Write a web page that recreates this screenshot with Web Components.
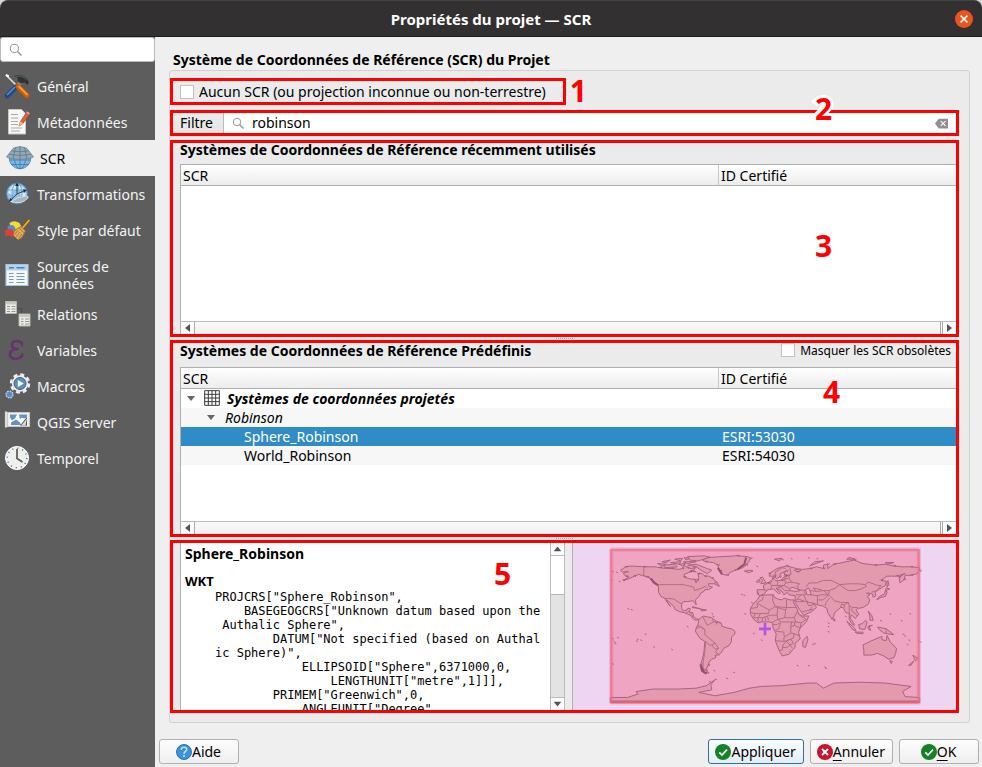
<!DOCTYPE html>
<html lang="fr">
<head>
<meta charset="utf-8">
<title>Propriétés du projet — SCR</title>
<style>
html, body { height: 100%; margin: 0; }
body { font: 14px/18px "Noto Sans", sans-serif; color: #000; background: #d8d8d8; }
</style>
</head>
<body>
<project-dialog></project-dialog>
<script>
const ICONS = {
  search: `<circle cx="10" cy="10" r="7.500" fill="none" stroke="#8c8c8c" stroke-width="1.8"/><path d="M15.500 15.500l7.500 7.500" stroke="#8c8c8c" stroke-width="2.4"/>`,
  general: `<path d="M1.5 1.500l10 10" stroke="#e4e4e0" stroke-width="1.6" stroke-linecap="round"/><path d="M.8 1l3 1.200" stroke="#fff" stroke-width="2"/><path d="M16 8L11 13" stroke="#888a85" stroke-width="3.500"/><path d="M2 22l9-9" stroke="#204a87" stroke-width="5" stroke-linecap="round"/><path d="M2 21l8-8" stroke="#5c8fd0" stroke-width="1.500"/><path d="M13 12.500l9 9" stroke="#ce5c00" stroke-width="5" stroke-linecap="round"/><path d="M13.500 12l9 9" stroke="#ff9630" stroke-width="2"/><path d="M9 2c5-2 10-1 13 3l2 3-1.500 3-3-2.500-4 1-3-3c1-2 0-3-3.500-4.500z" fill="#2e3436"/><path d="M11 2.500c4-1 8 0 10 3" stroke="#626765" fill="none"/>`,
  metadata: `<path d="M3.500-.5h13l4 4v20.500h-17z" fill="#f8f8f6" stroke="#c8c8c4"/><path d="M6 4.500h7M6 8h7M6 11.500h7M6 14.500h7M6 18h11M6 21h9" stroke="#aaa" stroke-width="1.200"/><path d="M14 16l1.500-4.500 5.500-8.500 3 2-6 8.500z" fill="#e0662f" stroke="#a9401b" stroke-width=".7"/><path d="M14 16l1.500-4.500 2.500 2z" fill="#e8c9a0"/><path d="M21 3L22 1.300l2.800 1.700-.8 2z" fill="#ee9a9a"/>`,
  crs: `<circle cx="12" cy="12" r="10.800" fill="#7db6e4" stroke="#4d87b8" stroke-width=".8"/><ellipse cx="12" cy="12" rx="5.500" ry="10.800" fill="none" stroke="#3f78aa" stroke-width=".8"/><path d="M12 1v22M1.500 14h21M3 18.500h18" stroke="#3f78aa" stroke-width=".8"/><path d="M-1.500 11L5 2.500Q12-1 19 2.500L25.500 11l-4 1.500Q12 14.500 2.500 12.500z" fill="#93a9b5" stroke="#6b8593" stroke-width=".8"/><path d="M1 8.200c7 1.500 15 1.500 22 0M3.500 4.800c6 1.200 11 1.200 17 0M7.500 1.500L5 13M16.500 1.500l2.500 11.500M12 .5v13" stroke="#5d7886" stroke-width=".8" fill="none"/>`,
  transform: `<circle cx="12" cy="11.500" r="10.500" fill="#8ec1ea" stroke="#4b81b1" stroke-width=".8"/><path d="M4 7l4-4 4 1-1 4-3 1-1 4-4-2zM14 3l5 3-2 4-3-2zM15 11h6l-1 4-4-1z" fill="#d5e8f6"/><ellipse cx="12" cy="11.500" rx="5" ry="10.500" fill="none" stroke="#4f87b8" stroke-width=".7"/><path d="M2 8h20" stroke="#4f87b8" stroke-width=".7"/><path d="M12 2v10L5.500 18M12 12l8-3.500" stroke="#3a4650" stroke-width="1" fill="none"/><path d="M12 .5l1.800 3.500h-3.600zM4 20l1.200-4 2.600 2.600zM22 8l-2.800 2.500-1.200-3z" fill="#1d2730"/><path d="M5.500 19.500Q12 15 21 14q3 0 2 2-6 7-17.500 3.500z" fill="#a9b3b8" stroke="#e4e9ec" stroke-width=".8"/>`,
  style: `<path d="M4.500 5Q9 1.500 14.500 5l3 6-11 2z" fill="#f4d93a"/><path d="M2.500 8.500Q6 6 9 8l3 5.500-9 2z" fill="#5c87c6"/><path d="M0 12.500Q4 10 7.500 12l3.500 6-4 1Q3 16.500.5 18.500z" fill="#dc3f36"/><path d="M17.500 10L24 2.500" stroke="#8f5902" stroke-width="2.800" stroke-linecap="round"/><path d="M17.500 10L24 2.500" stroke="#e9ae45" stroke-width="1.700" stroke-linecap="round"/><path d="M9.500 12.500L16 8.500l4.500 4.500-3.500 6.500-4 2.500-5-5z" fill="#e0ab5c" stroke="#9a6a22" stroke-width=".8"/><path d="M14 9.800l5.500 5.500M11 19l4-5M9.500 16.500l3.500-4M14 20l3-4" stroke="#9a6a22" stroke-width=".8"/>`,
  sources: `<path d="M1 1.500h22v21H1z" fill="#f7f7f7" stroke="#a8c4dc" stroke-width="1.200"/><path d="M1.600 2h20.800v5.500H1.600z" fill="#b4d2ec"/><path d="M4 4.700h5M11.500 4.700h8" stroke="#4484bd" stroke-width="1.500"/><path d="M4 10.500h4.500M4 13.500h4.500M4 16.500h4.500M4 19.500h4.500M11.500 10.500h8M11.500 13.500h8M11.500 16.500h8M11.500 19.500h8" stroke="#6a9bc8" stroke-width="1.100"/>`,
  relations: `<path d="M12 6.500h4.500v5" stroke="#3f4d63" fill="none"/><path d="M.500-.5h11v12h-11zM14 12h11v12H14z" fill="#eeeee8" stroke="#b5b5ae"/><path d="M1-.2h10v2.700H1zM14.500 12.300h10v2.700h-10z" fill="#c8c8c0"/><path d="M2 4.500h3M6.500 4.500h4M2 7h3M6.500 7h4M2 9.500h3M6.500 9.500h4M16 17h2.500M20 17h4M16 19.500h2.500M20 19.500h4M16 22h2.500M20 22h4" stroke="#94948c" stroke-width="1.100"/>`,
  variables: `<path d="M17 6.500C16.500 2.500 8.500 1.500 7 5.500c-1 4 3 6 6.500 5.500C8 10.500 4 14 5 17.500c1.500 4.800 11 4 12-.8" fill="none" stroke="#65346c" stroke-width="2.600"/><path d="M17 3.500v5M17.500 15v4" stroke="#65346c" stroke-width="1.500"/>`,
  macros: `<circle cx="15" cy="9.500" r="9" fill="none" stroke="#eee" stroke-width="2.500" stroke-dasharray="4 3.070"/><circle cx="15" cy="9.500" r="8.200" fill="#eeeeea"/><circle cx="15" cy="9.500" r="6" fill="#5b8cc6" stroke="#3b5f8a"/><path d="M12.800 6l6 3.500-6 3.500z" fill="#fff"/><circle cx="4.500" cy="20.500" r="3.500" fill="#6f9bd0" stroke="#c9d6e6" stroke-width="1.200" stroke-dasharray="1.700 1"/><circle cx="4.500" cy="20.500" r="2.500" fill="#5b8cc6"/>`,
  server: `<path d="M2.500 2.500h22v14h-22z" fill="#f1f1ed" stroke="#c7c7c2" stroke-width="1.200"/><path d="M5 4.500h17v10H5z" fill="#fff"/><path d="M5 4.500h7l-2 4-3 2-2-3zM14 4.500h8v3l-3 1-2-1-2 2zM6 12.500l5-3 4 3 1 2.500H6z" fill="#6391c4"/><path d="M15 15.500l7-8.500v8.500z" fill="#4a4f55"/><path d="M16 15.500l6-7-1.500 7z" fill="#d8d8d4"/><path d="M1 1.500v16" stroke="#ddd" stroke-width="2.200"/>`,
  clock: `<circle cx="12" cy="12" r="11.500" fill="#efefec" stroke="#fff"/><circle cx="12" cy="12" r="9.800" fill="none" stroke="#4f7fb3" stroke-width="1.500" stroke-dasharray="1.200 3.930"/><path d="M12 3v9.500l5.500 3.500" fill="none" stroke="#5a5a5a" stroke-width="1.700"/>`,
  grid: `<path d="M1 1h22v22H1zM6.500 1v22M12 1v22M17.500 1v22M1 6.500h22M1 12h22M1 17.500h22" fill="#fff" stroke="#3c3c3c" stroke-width="1.500"/>`,
  erase: `<path d="M7 3h17v18H7L0 12z" fill="#8f8f8f"/><path d="M10.500 7.500l9 9M19.500 7.500l-9 9" stroke="#fff" stroke-width="2"/>`,
  ok: `<circle cx="12" cy="12" r="12" fill="#15812a"/><path d="M6.500 12.500l4 4 7.500-8" fill="none" stroke="#fff" stroke-width="2.500"/>`,
  cancel: `<circle cx="12" cy="12" r="12" fill="#c5152f"/><path d="M7.500 7.500l9 9M16.500 7.500l-9 9" stroke="#fff" stroke-width="3"/>`,
  close: `<circle cx="12" cy="12" r="12" fill="#e95420"/><path d="M7.500 7.500l9 9M16.500 7.500l-9 9" stroke="#fff" stroke-width="2"/>`,
  help: `<circle cx="12" cy="12" r="11.200" fill="#3b93dc" stroke="#2272b8" stroke-width="1.500"/><path d="M8 8.500c0-5 8-5 8-.5 0 3-4 3-4 6.500" fill="none" stroke="#cfe8fb" stroke-width="2.200"/><circle cx="12" cy="18" r="1.500" fill="#cfe8fb"/>`
};
function define(name, html) {
  const t = document.createElement('template');
  t.innerHTML = html;
  customElements.define(name, class extends HTMLElement {
    constructor() {
      super();
      this.attachShadow({ mode: 'open' }).append(t.content.cloneNode(true));
    }
    connectedCallback() {
      this.shadowRoot.querySelectorAll('[data-attr]').forEach(e => { e.textContent = this.getAttribute(e.dataset.attr) || ''; });
    }
  });
}

customElements.define('ui-icon', class extends HTMLElement {
  connectedCallback() {
    if (this.shadowRoot) return;
    this.attachShadow({ mode: 'open' }).innerHTML = `<style>:host{display:block;flex:none;width:24px;height:24px}svg{display:block;width:100%;height:100%;overflow:visible}</style><svg viewBox="0 0 24 24" aria-hidden="true">${ICONS[this.getAttribute('name')]}</svg>`;
  }
});

define('title-bar', `<style>
:host{display:grid;grid-template-columns:1fr auto 1fr;align-items:center;height:37px;box-sizing:border-box;border-radius:8px 8px 0 0;background:#333031;border-top:1px solid #454243;border-bottom:1px solid #1d1b1c;color:#fff}
h1{grid-column:2;margin:0;font-size:15px;line-height:20px;font-weight:bold}
button{justify-self:end;margin-right:9px;padding:0;border:0;background:none;display:block}
ui-icon{width:18px;height:18px}
</style><h1><slot></slot></h1><button aria-label="Fermer"><ui-icon name="close"></ui-icon></button>`);

define('nav-item', `<style>
:host{display:block}
a{display:flex;align-items:center;gap:8px;box-sizing:border-box;min-height:36px;padding:0 4px 0 5px;color:#f4f4f4;line-height:17px;text-decoration:none}
:host([selected]) a{background:#efefef;color:#000;padding-left:8px}
:host([tall]) a{min-height:48px;padding-top:6px}
</style><a href="#"><slot name="icon"></slot><span><slot></slot></span></a>`);

define('side-bar', `<style>
:host{display:block;flex:none;width:155px;background:#5d5d5d}
.search{display:flex;align-items:center;height:25px;box-sizing:border-box;background:#fff;border:1px solid #bbb;border-radius:3px;margin-bottom:6px;padding-left:8px}
.search ui-icon{width:13px;height:13px}
input{flex:1;min-width:0;border:0;outline:0;background:none;font:inherit}
</style>
<div class="search"><ui-icon name="search"></ui-icon><input type="search" aria-label="Rechercher"></div>
<nav><slot></slot></nav>`);

define('marked-zone', `<style>
:host{display:flex;flex-direction:column;position:relative;box-sizing:border-box;border:3px solid #f00;min-height:0}
b{position:absolute;z-index:2;left:var(--mark-x);top:var(--mark-y);font-size:30px;line-height:30px;color:#f00}
:host([halo]) b{text-shadow:-2px -2px #fff,2px -2px #fff,-2px 2px #fff,2px 1px #fff,-5px 0 #fff,3px 0 #fff,0 -3px #fff}
</style><slot></slot><b data-attr="mark"></b>`);

define('check-box', `<style>
:host{display:block}
label{display:flex;align-items:center;gap:5px}
input{appearance:none;width:14px;height:14px;margin:0;flex:none;background:#fff;border:1px solid #c2c2c2}
</style><label><input type="checkbox"><span><slot></slot></span></label>`);

define('filter-row', `<style>
:host{display:flex;height:20px;background:#fff}
label{background:linear-gradient(#ececec,#e6e6e6);border-right:1px solid #bbb;padding:0 10px 0 7px;line-height:20px}
ui-icon{align-self:center;width:12px;height:12px;margin-left:8px}
button ui-icon{width:13px;height:13px;margin:0}
input{flex:1;min-width:0;border:0;outline:0;padding:0 0 0 8px;font:inherit;background:none}
button{border:0;background:none;padding:0 8px 0 0;display:flex}
</style><label for="f">Filtre</label><ui-icon name="search"></ui-icon><input id="f" type="text" value="robinson"><button aria-label="Effacer"><ui-icon name="erase"></ui-icon></button>`);

define('scroll-strip', `<style>
:host{display:flex;flex:none;height:12px;justify-content:space-between;border-top:1px solid #bbb;background:linear-gradient(#fafafa,#f0f0f0)}
i{width:13px;display:grid;place-items:center;background:#fcfcfc}
i:first-of-type{border-right:1px solid #aaa}
i:last-of-type{border-left:3px double #aaa}
svg{width:5px;height:8px}
:host([vertical]){flex-direction:column;width:13px;height:auto;border:0;border-left:1px solid #bbb;border-right:1px solid #bbb;background:linear-gradient(#fff 0 51px,#b5b5b5 51px 52px,#e3e3e3 52px)}
:host([vertical]) i{width:auto;height:12px;border:0;border-bottom:1px solid #bbb}
:host([vertical]) i:last-of-type{border:0;border-top:1px solid #bbb}
:host([vertical]) svg{transform:rotate(90deg)}
</style><i><svg viewBox="0 0 5 8"><path d="M5 0v8L0 4z" fill="#555"/></svg></i><i><svg viewBox="0 0 5 8"><path d="M0 0v8l5-4z" fill="#555"/></svg></i>`);

define('crs-table', `<style>
:host{display:flex;flex:1;min-height:0;flex-direction:column;margin-left:7px;border:solid #b0b0b0;border-width:1px 0 0 1px;background:#fff}
.body{flex:1;min-height:0;overflow:hidden}
table{width:100%;border-collapse:separate;border-spacing:0;table-layout:fixed}
.id{width:238px}
th{height:18px;padding:2px 2px 0;text-align:left;font-weight:normal;background:linear-gradient(#fff,#ececec);border-bottom:1px solid #b0b0b0}
th+th{border-left:1px solid #c8c8c8}
td{height:19px;padding:0 4px;line-height:19px;background:#fff}
tr:nth-child(even) td{background:#f7f7f7}
tr.sel td{background:#308cc6;color:#fff}
.cell{display:flex;align-items:center}
.cell ui-icon{width:16px;height:16px;margin:0 7px 0 9px}
.arrow{width:8px;height:5px;flex:none}
.l0{padding-left:2px;font-weight:bold;font-style:italic}
.l1{padding-left:22px;font-style:italic;gap:10px}
.l2{padding-left:59px}
</style>
<div class="body"><table><colgroup><col><col class="id"></colgroup><thead><tr><th scope="col">SCR</th><th scope="col">ID Certifié</th></tr></thead><tbody></tbody></table></div>
<scroll-strip></scroll-strip>`);
customElements.define('crs-tree', class extends customElements.get('crs-table') {
  connectedCallback() {
    const arrow = '<svg class="arrow" viewBox="0 0 8 5"><path d="M0 0h8L4 5z" fill="#666"/></svg>';
    this.shadowRoot.querySelector('tbody').innerHTML = `
<tr><td><div class="cell l0">${arrow}<ui-icon name="grid"></ui-icon>Systèmes de coordonnées projetés</div></td><td></td></tr>
<tr><td><div class="cell l1">${arrow}Robinson</div></td><td></td></tr>
<tr class="sel"><td><div class="cell l2">Sphere_Robinson</div></td><td>ESRI:53030</td></tr>
<tr><td><div class="cell l2">World_Robinson</div></td><td>ESRI:54030</td></tr>`;
  }
});

define('section-head', `<style>
:host{display:flex;flex:none;justify-content:space-between;padding:0 5px 7px 7px;line-height:14px}
:host([tall]){padding-bottom:9px;line-height:15px}
h3{margin:0;font-size:14px}
::slotted(check-box){font-size:12px}
</style><h3 data-attr="label"></h3><slot></slot>`);

define('split-handle', `<style>
:host{display:block;flex:none;height:3px}
i{display:block;width:17px;height:1px;margin:0 auto;border-bottom:1px dotted #aaa}
</style><i></i>`);

define('wkt-view', `<style>
:host{display:flex;flex:none;width:49%;margin-left:7px;border-left:1px solid #b0b0b0;background:#fff;min-height:0}
.text{flex:1;min-width:0;overflow:hidden;padding:1px 0 0 4px}
h4{margin:0;font-size:14px;line-height:19px}
h5{margin:9px 0 0;font-size:13px;line-height:18px}
pre{margin:0 0 0 30px;font:12px/14px "DejaVu Sans Mono",monospace}
</style><div class="text"><h4>Sphere_Robinson</h4><h5>WKT</h5><pre>PROJCRS["Sphere_Robinson",
    BASEGEOGCRS["Unknown datum based upon the
 Authalic Sphere",
        DATUM["Not specified (based on Authal
ic Sphere)",
            ELLIPSOID["Sphere",6371000,0,
                LENGTHUNIT["metre",1]]],
        PRIMEM["Greenwich",0,
            ANGLEUNIT["Degree"</pre></div><scroll-strip vertical></scroll-strip>`);

/* Coordinates are longitude, latitude in degrees. */
const LAND = [
'-168,66 -162,70 -156,71 -141,70 -128,70 -122,69 -115,68 -108,68 -101,67 -96,68 -94,72 -90,69 -86,68 -82,69 -82,67 -87,64 -94,61 -94,58 -88,56 -82,55 -80,51 -79,54 -77,57 -78,62 -73,62 -70,59 -65,59 -62,57 -56,52 -60,50 -66,50 -65,47 -61,46 -66,43 -70,43 -71,41 -75,39 -76,36 -81,31 -80,25 -82,28 -84,30 -90,29 -95,29 -97,26 -97,21 -95,18 -91,19 -90,21 -87,21 -88,16 -84,16 -83,11 -80,9 -77,8 -80,7 -83,8 -87,13 -94,16 -99,17 -105,20 -106,23 -112,29 -115,31 -110,23 -113,27 -117,33 -121,35 -124,40 -124,48 -130,54 -137,58 -147,61 -152,59 -158,56 -165,54 -158,58 -162,59 -165,62 -161,64 -166,64',
'-73,78 -66,81 -50,82 -32,83 -20,82 -17,80 -19,76 -22,72 -26,69 -35,66 -41,63 -44,60 -49,61 -52,65 -54,69 -55,72 -60,75 -69,76',
'-77,8 -72,12 -67,11 -62,10 -57,6 -51,4 -50,0 -44,-2 -39,-3 -35,-6 -35,-9 -39,-13 -39,-18 -42,-23 -48,-26 -50,-30 -54,-34 -58,-34 -57,-37 -62,-39 -65,-42 -66,-46 -68,-50 -69,-52 -65,-55 -70,-55 -74,-52 -75,-46 -73,-39 -71,-30 -70,-18 -76,-14 -81,-6 -80,-2 -78,2',
'-17,21 -13,27 -9,31 -6,36 3,37 10,37 11,34 15,32 20,31 22,33 29,31 34,31 33,28 37,21 39,15 43,12 51,12 48,5 41,-2 39,-7 41,-15 35,-20 35,-25 32,-28 28,-33 20,-35 17,-30 12,-17 13,-9 9,-1 9,4 5,5 -4,5 -8,4 -13,8 -17,14',
'-9,43 -1,43 -2,48 3,51 8,54 9,57 12,54 19,54 21,57 24,59 29,60 23,60 22,64 25,65 18,62 17,58 13,56 11,59 5,59 5,62 14,68 25,71 33,69 40,67 34,66 38,64 44,67 53,68 60,70 68,68 68,72 73,73 73,68 80,73 90,75 104,78 113,74 128,72 140,73 150,71 160,70 170,70 180,69 180,65 177,62 170,60 163,60 162,55 157,51 156,58 163,62 153,59 142,59 135,54 141,53 140,48 132,43 128,40 129,36 126,34 125,38 121,39 118,39 122,37 119,35 122,31 120,26 114,22 108,21 106,19 109,14 105,9 101,13 99,10 103,4 104,1 101,3 98,8 98,15 94,16 91,22 88,22 81,16 80,12 78,8 73,16 72,21 67,24 61,25 57,27 51,28 48,30 51,24 57,26 60,22 54,17 45,13 42,17 35,28 35,36 28,37 26,40 22,37 19,42 13,45 16,41 18,40 16,38 10,44 3,43 -1,38 -6,36 -9,38',
'114,-22 122,-18 129,-15 136,-12 136,-16 141,-17 142,-11 146,-19 153,-26 152,-32 150,-37 144,-39 138,-35 131,-32 124,-34 115,-34 115,-29',
'-180,-84 -160,-84 -148,-80 -150,-77 -130,-74 -100,-74 -80,-73 -68,-70 -58,-63 -63,-69 -62,-75 -77,-78 -58,-82 -36,-78 -18,-73 -5,-71 20,-70 50,-67 60,-67 68,-73 80,-67 110,-66 140,-67 170,-71 160,-77 163,-83 180,-84 180,-90 -180,-90',
'49,-12 50,-16 47,-25 44,-24 44,-17','-5,50 1,51 0,53 -3,58 -6,57 -3,54','-10,52 -6,52 -6,55 -9,54','-24,65 -16,66 -14,65 -19,63',
'130,31 135,34 140,35 142,40 141,42 145,44 141,45 139,38 133,35','142,46 144,49 143,54 142,52',
'131,-1 141,-3 150,-10 143,-9 138,-8 133,-4','109,2 113,3 117,7 119,5 116,-4 110,-3','95,6 104,-2 106,-6 101,-3','105,-7 114,-7 114,-9 106,-8','120,0 125,1 121,0 123,-5 120,-3','120,18 124,13 126,7 122,7 122,12','172,-34 178,-38 175,-41','173,-41 167,-46 170,-46','145,-41 148,-41 147,-44','80,9 82,7 80,6',
'-85,22 -77,21 -74,20 -84,23','-74,20 -68,19 -74,18','-59,50 -53,47 -56,52',
'-90,72 -80,73 -70,69 -62,66 -67,62 -73,65 -80,70','-118,72 -105,73 -102,70 -117,69','-125,74 -115,73 -120,71','-90,82 -70,83 -65,81 -78,77 -88,78','-110,75 -98,76 -100,73','-95,76 -80,76 -90,74','-120,76 -110,78 -115,75','-105,79 -96,80 -98,77','-94,81 -88,80 -92,78','-100,73 -92,74 -96,71','52,71 58,76 68,77 57,73','140,75 150,75 142,73','11,79 20,80 17,77','95,79 105,79 98,81','-87,65 -80,64 -84,66'
];
const BORDERS = [
'-141,70 -141,60 -130,55','-123,49 -95,49 -83,46 -82,42 -76,44 -69,47 -67,45','-117,33 -106,32 -97,26','-92,15 -88,18','-84,11 -86,15',
'-78,1 -70,-4 -70,-10 -58,-20 -54,-26 -58,-30 -53,-34','-72,11 -70,6 -67,1 -60,5 -52,4','-80,-3 -75,0 -70,-4','-69,-18 -65,-22 -62,-22 -58,-20','-62,-22 -58,-27 -54,-26','-69,-18 -70,-30 -72,-42 -72,-50 -68,-52','-60,5 -61,8','-57,6 -56,2',
'-9,28 -9,22 -17,21','-9,27 5,19 12,23 25,22 25,31','25,22 37,22','-2,35 -3,31 -9,28','9,37 9,30 12,23','5,19 4,15 -5,15 -12,15 -17,16','12,23 15,22 14,13 4,13','15,22 24,19 23,10 15,8 14,13','24,19 25,22','23,10 34,10 38,18','34,10 36,5 24,5 19,5 15,8','36,5 42,4 48,8 43,11 38,15','42,4 41,-2 34,1 35,5','34,1 30,-1 30,-8 34,-9 40,-11','30,-1 31,5','30,-8 24,-12 22,-11 22,-7 13,-6','24,-12 22,-13 22,-18 12,-17','22,-18 28,-16 33,-14 34,-9','28,-16 25,-18 29,-22 33,-20 30,-15','25,-18 21,-22 20,-28 17,-29','20,-25 26,-25 29,-22 32,-26','9,2 14,2 18,4 16,-3 12,-5','-5,15 -8,10 -3,10 3,12 4,7','-3,10 -3,5','-8,10 -8,5','0,11 1,6','4,13 3,12','15,8 9,5','-12,15 -13,10 -8,10','28,-29 29,-30',
'-9,42 -7,37','-2,43 3,42','8,54 6,50 8,48 7,44','8,48 14,48 15,51 14,54','14,48 22,48 24,51 23,54 19,54','22,48 27,45 29,45','24,51 31,52 40,50 38,47','31,52 28,56 28,60 30,62 29,69','16,46 19,46 21,44 23,42 29,42','12,59 12,64 20,69 24,68','14,46 16,46 22,48','28,60 31,62','3,51 6,50','22,56 27,56','23,54 24,58',
'48,46 51,51 60,51 68,54 77,54 87,49 82,45 75,42 68,42 60,41 53,42','87,49 98,50 108,50 117,49 120,52 126,50 131,48 135,48 131,43','87,49 92,45 97,42 105,42 112,44 118,47 116,49','75,42 74,37 78,33 81,30 88,28 97,28 98,24 102,22 108,22','61,25 61,31 61,36 65,37 71,37 74,37','53,37 61,36','61,31 67,31 70,33 74,37','70,24 71,28 75,33','45,41 48,38 45,37 48,30','36,37 42,37 45,37','35,30 39,32 47,29','37,32 42,37','36,29 47,29','43,17 52,19 56,20','52,19 55,23','88,22 89,26 92,25 93,22','98,24 98,17 99,12','101,21 101,18 105,15 107,12','68,42 71,40 73,37','60,41 56,45 66,43','37,47 40,43 48,42','97,28 92,25','124,40 130,42','141,-3 141,-9'
];
const SPECKS = '-178,65 -173,64 -179,55 -170,53 -160,21 -156,20 -150,-17 -149,-15 -140,-9 -145,-16 -172,-13 -176,-18 -178,-14 -175,-20 -91,0 -24,15 -28,38 -25,37 -16,28 -60,-52 -37,-54 70,-49 69,-48 55,-21 57,-20 73,0 73,4 145,15 158,7 168,15 160,-9 162,-11 167,-16 165,-21 178,-17 180,-18 -62,15 -61,12 -178,-44 -5,-16 -14,-8 50,-46 37,-46 73,-6 134,7 93,12 -109,-27 -130,-24 -10,71 20,79 30,80 50,81 60,80 -65,-65 -58,-62 -45,-61'.split(' ').map(p => `M${p}l2,-1`).join('');
const COAST = LAND.slice(0, 5).map(p => p.split(' ').map((q, i) => {
  const [x, y] = q.split(',').map(Number);
  return (y > 50 || x < -65 && y < -40) && i % 2 ? `M${x - 1},${y}l1,1l1,-1l1,1l-1,-2` : '';
}).join('')).join('');

define('extent-map', `<style>
:host{display:block;flex:1;min-width:0;background:#eed6f2;border-left:1px solid #b0b0b0;box-shadow:-7px 0 #ebebeb;margin-left:7px}
svg{display:block;width:100%;height:100%}
</style>
<svg viewBox="38 20 1152 502" role="img" aria-label="Étendue du système de coordonnées">
<rect x="150" y="38" width="930" height="464" rx="3" fill="#efa5c2"/>
<g transform="translate(615 270) scale(2.583 -2.55)" fill="#e39aae" stroke="#a86480" stroke-width="1" stroke-linejoin="round">
${LAND.map(p => `<polygon points="${p}" vector-effect="non-scaling-stroke"/>`).join('')}
<path d="${BORDERS.map(p => 'M' + p.replace(/ /g, 'L')).join('')}" fill="none" stroke="#b26e86" vector-effect="non-scaling-stroke"/>
<path d="${SPECKS}" fill="none" vector-effect="non-scaling-stroke"/>
<path d="${COAST}" fill="none" stroke="#96506c" stroke-opacity=".6" vector-effect="non-scaling-stroke"/>
<polygon points="51,45 54,37 49,37 47,43" fill="#efa5c2" vector-effect="non-scaling-stroke"/>
<polygon points="28,42 31,46 35,45 41,42 36,41" fill="#efa5c2" vector-effect="non-scaling-stroke"/>
<path d="M-133,56l4,-5l5,-3M-75,-45l2,-8l5,-3M-74,-48l3,-6M-22,81l-2,-8l-8,-6M-50,61l-5,8" fill="none" stroke="#96506c" stroke-width="2" vector-effect="non-scaling-stroke"/>
</g>
<rect x="153" y="40" width="924" height="459" rx="3" fill="none" stroke="#ef6d8b" stroke-opacity=".3" stroke-width="14"/>
<rect x="153" y="40" width="924" height="459" rx="2" fill="none" stroke="#ea6d89" stroke-opacity=".7" stroke-width="6"/>
<path d="M153 496h924" stroke="#d9627e" stroke-width="6"/>
<path d="M615 260v37M597 278h36" stroke="#b455dc" stroke-width="8"/>
</svg>`);

define('push-button', `<style>
:host{display:block}
button{display:flex;align-items:center;justify-content:center;box-sizing:border-box;min-width:80px;height:25px;padding:0 7px 0 6px;border:1px solid #b0b0b0;border-radius:3px;background:linear-gradient(#fdfdfd,#efefef);font:inherit;color:#000;white-space:nowrap}
:host([primary]) button{border-color:#2f709f;background:linear-gradient(#fafdff,#e4edf4)}
::slotted(ui-icon){width:16px;height:16px}
</style><button><slot name="icon"></slot><span><slot></slot></span></button>`);

define('project-dialog', `<style>
:host{display:flex;flex-direction:column;height:100vh;background:#d8d8d8}
.work{display:flex;flex:1;min-height:0}
main{flex:1;min-width:0;display:flex;flex-direction:column;background:#efefef}
h2{margin:14px 0 1px 18px;font-size:14px;line-height:18px}
.panel{flex:1;min-height:0;display:flex;flex-direction:column;margin:0 12px 0 14px;padding:7px 10px 9px 0;border:1px solid #d2d2d2;border-radius:3px;background:#ebebeb}
marked-zone{flex:8 1 0}
.none{flex:none;align-self:flex-start;padding:0 17px 0 7px;margin-bottom:5px;line-height:21px;--mark-x:calc(100% + 7px);--mark-y:-5px}
.filter{flex:none;margin-bottom:4px;--mark-x:82%;--mark-y:-19px}
.recent{--mark-x:82%;--mark-y:88px}
.known{--mark-x:83%;--mark-y:34px}
.preview{flex:7 1 0;--mark-x:41%;--mark-y:16px}
.cols{display:flex;flex:1;min-height:0}
footer{display:flex;gap:6px;padding:16px 3px 3px 4px}
.space{flex:1}
u{text-underline-offset:3px}
</style>
<title-bar>Propriétés du projet — SCR</title-bar>
<div class="work">
<side-bar>
<nav-item><ui-icon slot="icon" name="general"></ui-icon>Général</nav-item>
<nav-item><ui-icon slot="icon" name="metadata"></ui-icon>Métadonnées</nav-item>
<nav-item selected><ui-icon slot="icon" name="crs"></ui-icon>SCR</nav-item>
<nav-item><ui-icon slot="icon" name="transform"></ui-icon>Transformations</nav-item>
<nav-item><ui-icon slot="icon" name="style"></ui-icon>Style par défaut</nav-item>
<nav-item tall><ui-icon slot="icon" name="sources"></ui-icon>Sources de données</nav-item>
<nav-item><ui-icon slot="icon" name="relations"></ui-icon>Relations</nav-item>
<nav-item><ui-icon slot="icon" name="variables"></ui-icon>Variables</nav-item>
<nav-item><ui-icon slot="icon" name="macros"></ui-icon>Macros</nav-item>
<nav-item><ui-icon slot="icon" name="server"></ui-icon>QGIS Server</nav-item>
<nav-item><ui-icon slot="icon" name="clock"></ui-icon>Temporel</nav-item>
</side-bar>
<main>
<h2>Système de Coordonnées de Référence (SCR) du Projet</h2>
<div class="panel">
<marked-zone class="none" mark="1"><check-box>Aucun SCR (ou projection inconnue ou non-terrestre)</check-box></marked-zone>
<marked-zone class="filter" mark="2" halo><filter-row></filter-row></marked-zone>
<marked-zone class="recent" mark="3"><section-head label="Systèmes de Coordonnées de Référence récemment utilisés"></section-head><crs-table></crs-table></marked-zone>
<split-handle></split-handle>
<marked-zone class="known" mark="4"><section-head tall label="Systèmes de Coordonnées de Référence Prédéfinis"><check-box>Masquer les SCR obsolètes</check-box></section-head><crs-tree></crs-tree></marked-zone>
<split-handle></split-handle>
<marked-zone class="preview" mark="5"><div class="cols"><wkt-view></wkt-view><extent-map></extent-map></div></marked-zone>
</div>
<footer>
<push-button><ui-icon slot="icon" name="help"></ui-icon>Aide</push-button>
<span class="space"></span>
<push-button primary><ui-icon slot="icon" name="ok"></ui-icon>Appliquer</push-button>
<push-button><ui-icon slot="icon" name="cancel"></ui-icon><u>A</u>nnuler</push-button>
<push-button><ui-icon slot="icon" name="ok"></ui-icon><u>O</u>K</push-button>
</footer>
</main>
</div>`);
</script>
</body>
</html>
